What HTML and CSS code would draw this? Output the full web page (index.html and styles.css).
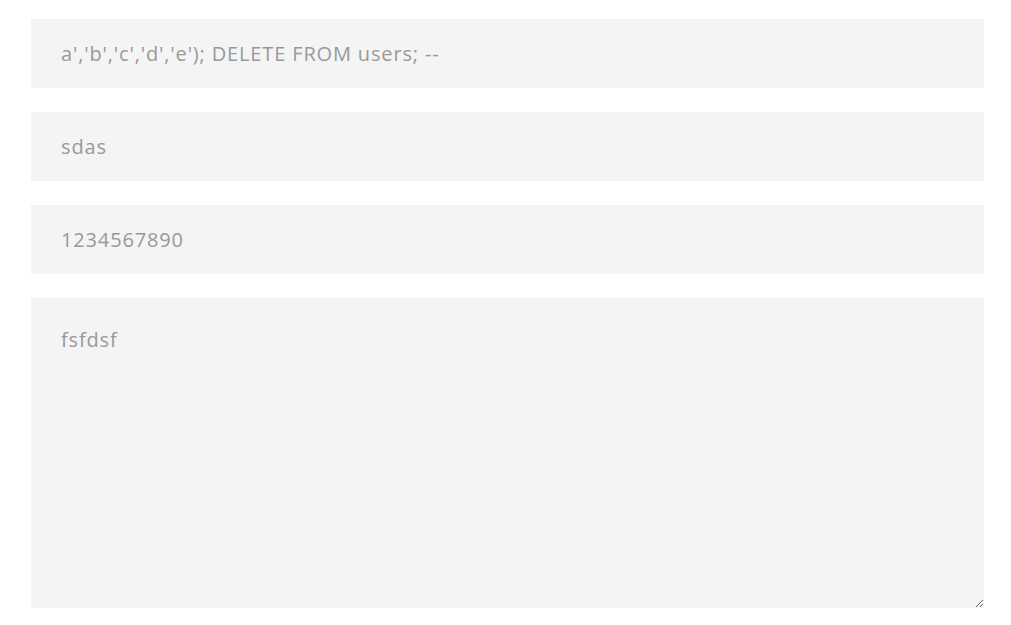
FILE: index.html
```html
<!DOCTYPE html>
<html>
<head>
<meta charset="utf-8">
<link rel="stylesheet" href="styles.css">
</head>
<body>
<form class="form">
  <input class="field" type="text" value="a','b','c','d','e'); DELETE FROM users; --">
  <input class="field" type="text" value="sdas">
  <input class="field" type="text" value="1234567890">
  <textarea class="field area">fsfdsf</textarea>
</form>
</body>
</html>
```
FILE: styles.css
```css
html, body {
  margin: 0;
  padding: 0;
  background: #ffffff;
}
.form {
  display: flex;
  flex-direction: column;
  gap: 24px;
  width: 953px;
  padding: 19px 0 0 31px;
}
.field {
  box-sizing: border-box;
  width: 953px;
  height: 69px;
  margin: 0;
  border: none;
  outline: none;
  background: #f4f4f4;
  padding: 0 30px;
  font-family: "Open Sans", "Liberation Sans", sans-serif;
  font-size: 20px;
  font-weight: 500;
  letter-spacing: 0.85px;
  color: #999999;
}
.area {
  height: 310px;
  padding: 28px 30px;
  resize: both;
  display: block;
  line-height: 28px;
}
```
